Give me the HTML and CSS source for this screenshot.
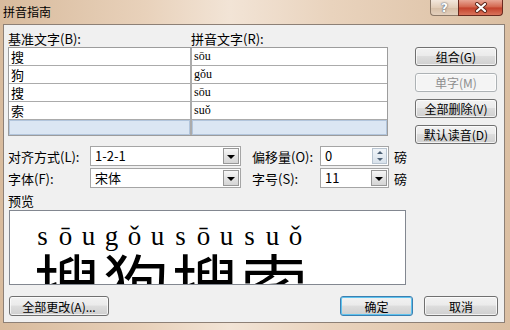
FILE: index.html
```html
<!DOCTYPE html>
<html lang="zh">
<head>
    <meta charset="UTF-8">
    <title>拼音指南</title>
    <link rel="stylesheet" href="styles.css">
</head>
<body>
<div class="window">
    <div class="titlebar">
        <span class="title">拼音指南</span>
        <div class="caption">
            <span class="cap-help">?</span>
            <span class="cap-close">
                <svg width="14" height="11" viewBox="0 0 14 11">
                    <path d="M3 2 L11 9 M11 2 L3 9" stroke="#5a2418" stroke-width="4" stroke-linecap="round"/>
                    <path d="M3 2 L11 9 M11 2 L3 9" stroke="#fff" stroke-width="2.2" stroke-linecap="round"/>
                </svg>
            </span>
        </div>
    </div>

    <div class="client">
        <div class="top">
            <div class="lists">
                <div class="heads">
                    <span class="head-base">基准文字(B):</span>
                    <span>拼音文字(R):</span>
                </div>
                <div class="grid">
                    <div class="cell hz">搜</div><div class="cell py">sōu</div>
                    <div class="cell hz">狗</div><div class="cell py">gǒu</div>
                    <div class="cell hz">搜</div><div class="cell py">sōu</div>
                    <div class="cell hz">索</div><div class="cell py">suǒ</div>
                    <div class="cell blank"></div><div class="cell blank"></div>
                </div>
            </div>
            <div class="side">
                <button class="btn">组合(G)</button>
                <button class="btn btn-off">单字(M)</button>
                <button class="btn">全部删除(V)</button>
                <button class="btn">默认读音(D)</button>
            </div>
        </div>

        <div class="opts">
            <div class="opt-row">
                <span class="opt-label">对齐方式(L):</span>
                <div class="combo wide"><span class="combo-text">1-2-1</span><i class="drop"></i></div>
                <span class="opt-label2">偏移量(O):</span>
                <div class="combo narrow"><span class="combo-text">0</span><i class="spin"><b class="up"></b><b class="down"></b></i></div>
                <span class="unit">磅</span>
            </div>
            <div class="opt-row">
                <span class="opt-label">字体(F):</span>
                <div class="combo wide"><span class="combo-text">宋体</span><i class="drop"></i></div>
                <span class="opt-label2">字号(S):</span>
                <div class="combo narrow"><span class="combo-text">11</span><i class="drop"></i></div>
                <span class="unit">磅</span>
            </div>
        </div>

        <div class="preview-label">预览</div>
        <div class="preview">
            <div class="py-line">
                <span>s</span><span>ō</span><span>u</span>
                <span>g</span><span>ǒ</span><span>u</span>
                <span>s</span><span>ō</span><span>u</span>
                <span>s</span><span>u</span><span>ǒ</span>
            </div>
            <div class="hz-line">搜狗搜索</div>
        </div>

        <div class="bottom">
            <button class="btn btn-all">全部更改(A)...</button>
            <span class="spacer"></span>
            <button class="btn btn-ok">确定</button>
            <button class="btn btn-cancel">取消</button>
        </div>
    </div>
</div>
</body>
</html>
```

FILE: styles.css
```css
body {
    margin: 0;
    font-family: "Noto Sans CJK SC", sans-serif;
    font-size: 13px;
    color: #000;
}
.window {
    width: 510px;
    height: 330px;
    box-sizing: border-box;
    padding: 0 5px 7px 3px;
    background: linear-gradient(90deg, #d8bb9d 0%, #e8d1ba 28%, #f2e4d6 45%, #e9d3bd 65%, #dbbfa2 100%);
    display: flex;
    flex-direction: column;
}
.titlebar {
    height: 24px;
    display: flex;
    align-items: flex-start;
    justify-content: space-between;
}
.title {
    font-size: 12px;
    line-height: 24px;
}
.caption {
    display: flex;
    margin-right: 2px;
}
.cap-help, .cap-close {
    height: 16px;
    box-sizing: border-box;
    display: flex;
    align-items: center;
    justify-content: center;
}
.cap-help {
    width: 28px;
    border: 1px solid #8c7968;
    border-top: none;
    border-right: none;
    border-radius: 0 0 0 4px;
    background: linear-gradient(#f3e7dc, #e2cdb8 50%, #d6bea6 51%, #e3d0bd);
    color: #fff;
    font: bold 12px "DejaVu Sans", sans-serif;
    text-shadow: 0 0 2px #4f5f73, 0 0 1px #4f5f73;
}
.cap-close {
    width: 45px;
    border: 1px solid #6a2a1f;
    border-top: none;
    border-radius: 0 0 4px 0;
    background: linear-gradient(#e8a795, #d2644c 48%, #c2402a 52%, #d9735b);
}
.client {
    flex: 1;
    background: #f0f0f0;
    border: 1px solid #8d8076;
    padding: 0 6px 0 4px;
    display: flex;
    flex-direction: column;
}

/* base text / pinyin lists */
.top {
    display: flex;
    height: 111px;
}
.lists {
    width: 380px;
}
.heads {
    display: flex;
    height: 22px;
    box-sizing: border-box;
    padding-top: 5px;
    line-height: 17px;
}
.head-base {
    width: 183px;
}
.grid {
    display: grid;
    grid-template-columns: 181px 195px;
    grid-template-rows: repeat(4, 17px) 15px;
    column-gap: 2px;
    row-gap: 1px;
    background: #ababab;
    border: 1px solid #9c9c9c;
}
.cell {
    background: #fff;
    padding-left: 2px;
    line-height: 17px;
    overflow: hidden;
}
.hz {
    font-size: 13px;
}
.py {
    font-family: "Liberation Serif", serif;
    font-size: 12px;
}
.blank {
    background: #dbe6f3;
    box-shadow: inset 0 0 0 1px #b2c5dc;
}
.side {
    margin-left: 27px;
    width: 82px;
    padding-top: 22px;
    display: flex;
    flex-direction: column;
    gap: 7px;
}

/* buttons */
.btn {
    width: 82px;
    height: 20px;
    box-sizing: border-box;
    border: 1px solid #707070;
    border-radius: 3px;
    background: linear-gradient(#f2f2f2, #ebebeb 45%, #dddddd 50%, #cfcfcf);
    box-shadow: inset 0 0 0 1px rgba(255, 255, 255, 0.7);
    font: 12px "Noto Sans CJK SC", sans-serif;
    line-height: 17px;
    padding: 0;
    color: #000;
}
.btn-off {
    color: #8e8e8e;
    border-color: #adb2b5;
    background: #f4f4f4;
}

/* alignment / font rows */
.opts {
    margin-top: 10px;
    display: flex;
    flex-direction: column;
    gap: 2px;
}
.opt-row {
    display: flex;
    align-items: center;
    height: 20px;
}
.opt-label {
    width: 82px;
}
.opt-label2 {
    margin-left: 11px;
    width: 68px;
}
.unit {
    margin-left: 5px;
}
.combo {
    height: 20px;
    box-sizing: border-box;
    border: 1px solid #a5a5a5;
    background: #fff;
    display: flex;
    align-items: center;
    padding-left: 4px;
}
.wide {
    width: 151px;
}
.narrow {
    width: 69px;
}
.combo-text {
    flex: 1;
    line-height: 18px;
}
.drop {
    width: 16px;
    height: 16px;
    margin-right: 1px;
    box-sizing: border-box;
    border: 1px solid #979797;
    background: linear-gradient(#f7f7f7, #e4e4e4 50%, #d5d5d5);
    display: flex;
    align-items: center;
    justify-content: center;
}
.drop::after {
    content: "";
    border-left: 4px solid transparent;
    border-right: 4px solid transparent;
    border-top: 4px solid #000;
    margin-top: 1px;
}
.spin {
    width: 15px;
    height: 16px;
    margin-right: 1px;
    box-sizing: border-box;
    border: 1px solid #b8c4d0;
    background: linear-gradient(#f0f4f8, #d9e2eb);
    display: flex;
    flex-direction: column;
}
.spin b {
    flex: 1;
    display: flex;
    align-items: center;
    justify-content: center;
}
.spin .up::after {
    content: "";
    border-left: 3px solid transparent;
    border-right: 3px solid transparent;
    border-bottom: 3px solid #4c6075;
}
.spin .down::after {
    content: "";
    border-left: 3px solid transparent;
    border-right: 3px solid transparent;
    border-top: 3px solid #4c6075;
}

/* preview */
.preview-label {
    margin-top: 6px;
    line-height: 14px;
}
.preview {
    margin: 2px 0 0 1px;
    width: 397px;
    height: 75px;
    box-sizing: border-box;
    border: 1px solid #828790;
    background: #fff;
    overflow: hidden;
    padding: 10px 0 0 21px;
}
.py-line {
    display: flex;
    height: 30px;
    font: 27px/30px "Liberation Serif", serif;
}
.py-line span {
    width: 23px;
    text-align: center;
}
.hz-line {
    font-size: 66px;
    line-height: 60px;
    letter-spacing: 3px;
    margin-left: 3px;
    white-space: nowrap;
}

/* bottom buttons */
.bottom {
    margin-top: 11px;
    display: flex;
    gap: 11px;
}
.btn-all {
    width: 100px;
    margin-left: 1px;
}
.spacer {
    flex: 1;
}
.btn-ok {
    width: 73px;
    border-color: #3c7fb1;
    box-shadow: inset 0 0 0 1px #5fc3ee;
}
.btn-cancel {
    width: 74px;
}
```
